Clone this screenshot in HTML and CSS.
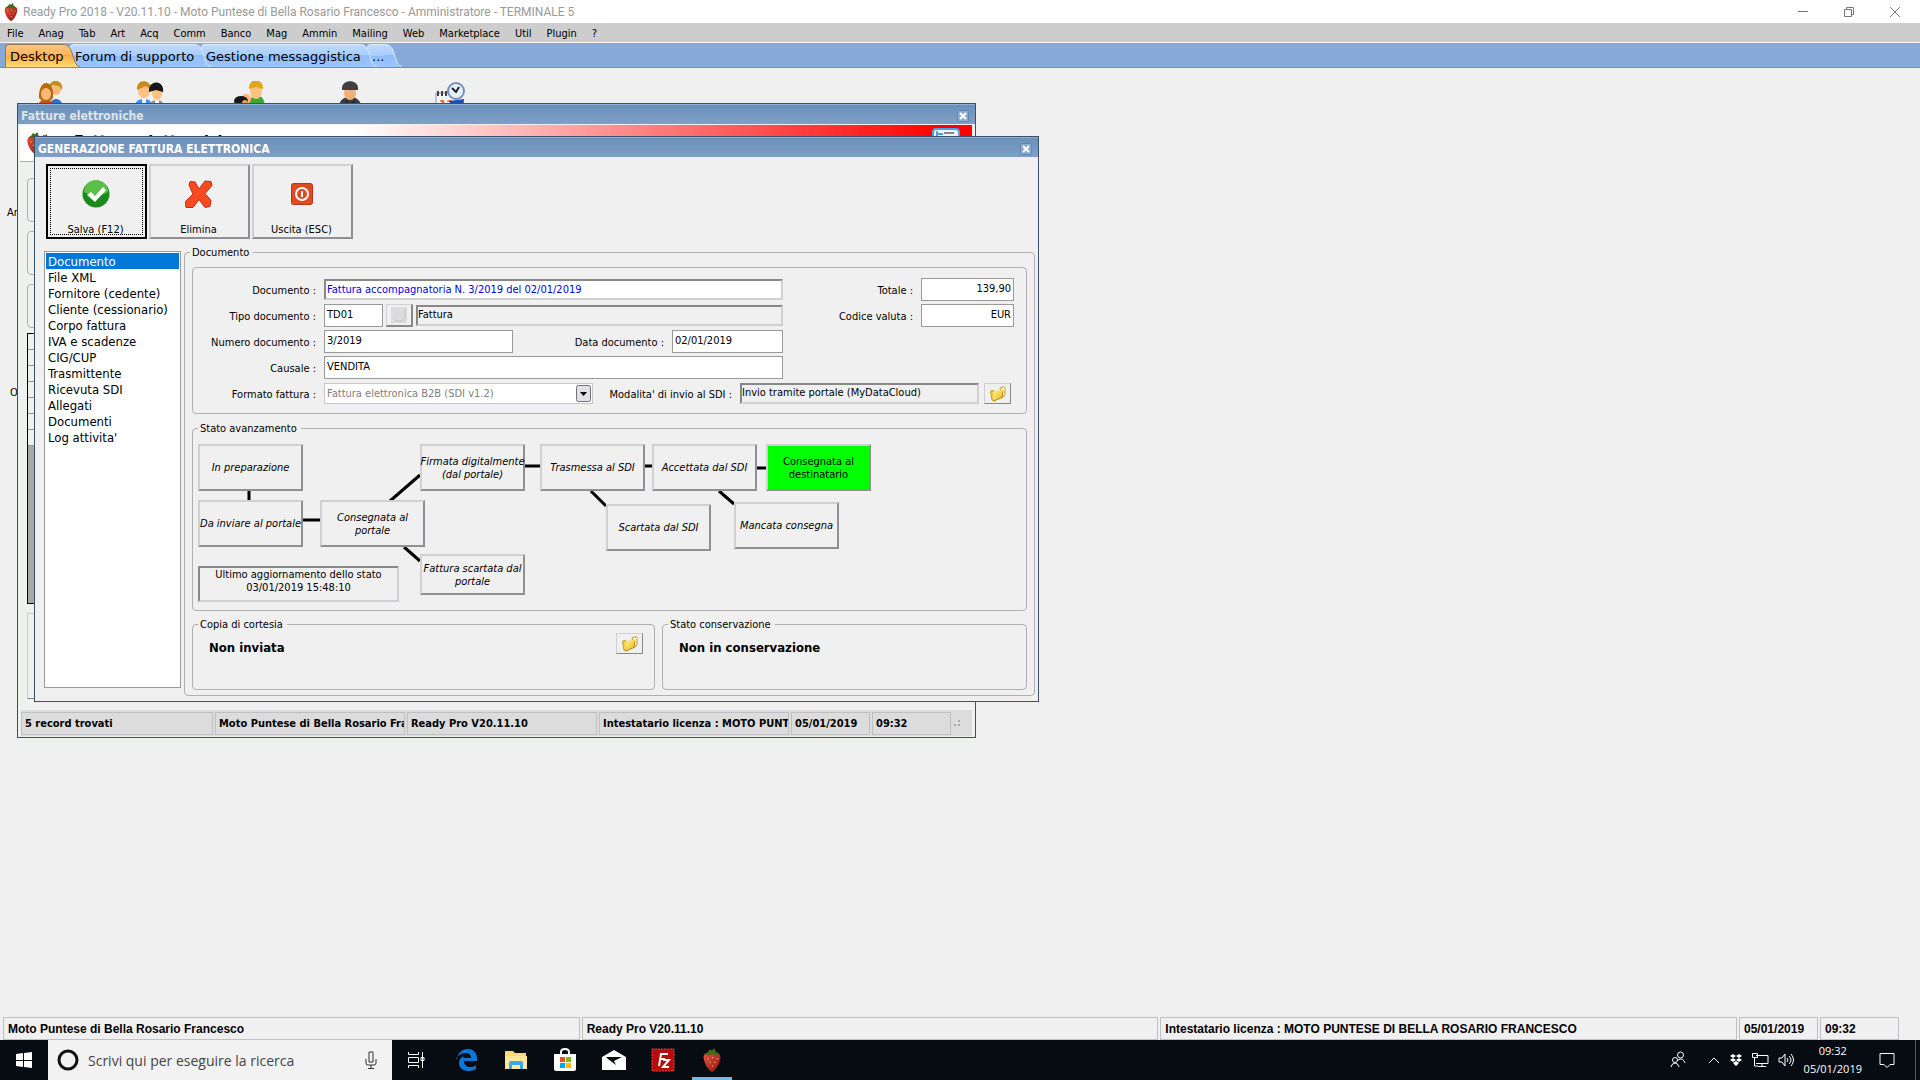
FILE: index.html
```html
<!DOCTYPE html>
<html lang="it">
<head>
  <meta charset="UTF-8">
  <meta name="viewport" content="width=device-width, initial-scale=1.0">
  <title>Ready Pro 2018</title>
  <link rel="stylesheet" href="styles.css">
</head>
<body>
  <!-- Shared symbols -->
  <svg class="defs" width="0" height="0" aria-hidden="true">
    <defs>
      <linearGradient id="berry" x1="0" y1="0" x2="1" y2="1">
        <stop offset="0" stop-color="#e8523a"/>
        <stop offset="1" stop-color="#8c1410"/>
      </linearGradient>
      <linearGradient id="folder" x1="0" y1="0" x2="1" y2="1">
        <stop offset="0" stop-color="#fff3a0"/>
        <stop offset="1" stop-color="#e6b800"/>
      </linearGradient>
      <linearGradient id="tabOn" x1="0" y1="0" x2="0" y2="1">
        <stop offset="0" stop-color="#ffc580"/>
        <stop offset="0.45" stop-color="#ffb65a"/>
        <stop offset="0.5" stop-color="#ffab3c"/>
        <stop offset="1" stop-color="#ffdc78"/>
      </linearGradient>
      <linearGradient id="tabOff" x1="0" y1="0" x2="0" y2="1">
        <stop offset="0" stop-color="#c0daff"/>
        <stop offset="0.48" stop-color="#a8cdff"/>
        <stop offset="0.5" stop-color="#8fbcfb"/>
        <stop offset="1" stop-color="#9cc6ff"/>
      </linearGradient>
    </defs>
    <symbol id="i-berry" viewBox="0 0 16 20">
      <path d="M1 8C1 4 4 4 8 4s7 0 7 4-4 11-7 12C5 19 1 12 1 8z" fill="url(#berry)"/>
      <path d="M2 5l3-2 1-2 2 1 2-2 1 3 3 2-3 1-3-1-3 1z" fill="#3f6b1c"/>
      <path d="M4 9h1M8 8h1M12 9h1M6 12h1M10 12h1M8 15h1" stroke="#ffb09a" stroke-width="1"/>
    </symbol>
    <symbol id="i-folder" viewBox="0 0 16 16">
      <path d="M10 2l4-1.500 1 1v8l-3 2z" fill="#fffbe0" stroke="#c8981c"/>
      <path d="M.5 5.500L2 4.500l3 1V15l-3-1z" fill="#f0cc50" stroke="#c8981c"/>
      <path d="M3.500 6l3-2 1 1 5-2 1 1-1 7-8 4-1-1z" fill="url(#folder)"/>
      <path d="M3.500 15l8.500-3.500 1-6" fill="none" stroke="#b88410"/>
    </symbol>
    <symbol id="i-close" viewBox="0 0 12 12">
      <rect x="0.500" y="0.500" width="11" height="11" rx="1" fill="#8aa9cd" stroke="#6487b0"/>
      <path d="M3 3l6 6M9 3l-6 6" stroke="#fff" stroke-width="2"/>
    </symbol>
  </svg>

  <header class="titlebar">
    <svg class="app-icon" width="16" height="18"><use href="#i-berry"/></svg>
    <span class="app-title">Ready Pro 2018 - V20.11.10 - Moto Puntese di Bella Rosario Francesco - Amministratore - TERMINALE 5</span>
    <div class="win-controls">
      <button type="button" aria-label="Riduci a icona"><svg width="12" height="12"><path d="M1 5.500h10" stroke="#777" fill="none"/></svg></button>
      <button type="button" aria-label="Ripristina"><svg width="12" height="12"><path d="M1.500 3.500h7v7h-7zM3.500 3.500v-2h7v7h-2" stroke="#777" fill="none"/></svg></button>
      <button type="button" aria-label="Chiudi"><svg width="12" height="12"><path d="M1 1l10 10M11 1L1 11" stroke="#777" fill="none"/></svg></button>
    </div>
  </header>

  <nav class="menubar">
    <button type="button">File</button>
    <button type="button">Anag</button>
    <button type="button">Tab</button>
    <button type="button">Art</button>
    <button type="button">Acq</button>
    <button type="button">Comm</button>
    <button type="button">Banco</button>
    <button type="button">Mag</button>
    <button type="button">Ammin</button>
    <button type="button">Mailing</button>
    <button type="button">Web</button>
    <button type="button">Marketplace</button>
    <button type="button">Util</button>
    <button type="button">Plugin</button>
    <button type="button">?</button>
  </nav>

  <div class="tabs">
    <button type="button" class="tab tab-on">Desktop<svg class="cap" width="18" height="23"><path d="M0 0C6 0 8 3 10 9S13 23 18 23H0z" fill="url(#tabOn)"/><path d="M0 .5C6 .5 8 3 10 9S13 22 18 22.500" fill="none" stroke="#8a7a5a"/></svg></button>
    <button type="button" class="tab tab-forum">Forum di supporto<svg class="cap" width="18" height="23"><path d="M0 0C6 0 8 3 10 9S13 23 18 23H0z" fill="url(#tabOff)"/><path d="M0 .5C6 .5 8 3 10 9S13 22 18 22.500" fill="none" stroke="#dcebff"/></svg></button>
    <button type="button" class="tab tab-msg">Gestione messaggistica<svg class="cap" width="18" height="23"><path d="M0 0C6 0 8 3 10 9S13 23 18 23H0z" fill="url(#tabOff)"/><path d="M0 .5C6 .5 8 3 10 9S13 22 18 22.500" fill="none" stroke="#dcebff"/></svg></button>
    <button type="button" class="tab tab-more">...<svg class="cap" width="18" height="23"><path d="M0 0C6 0 8 3 10 9S13 23 18 23H0z" fill="url(#tabOff)"/><path d="M0 .5C6 .5 8 3 10 9S13 22 18 22.500" fill="none" stroke="#dcebff"/></svg></button>
  </div>

  <main class="desktop">
    <div class="shortcuts">
      <svg width="32" height="32" viewBox="0 0 32 32">
        <path d="M14 32c0-8 3-14 8-14s8 6 8 14z" fill="#2f6fd0"/>
        <circle cx="22" cy="9" r="5" fill="#ffb877"/><path d="M15 8c-1-11 15-11 13 1l-3-4-6-1z" fill="#c88a18"/>
        <path d="M3 32c0-11 3-13 9-13s9 3 9 13z" fill="#cf4a1c"/>
        <path d="M5 17c-1-20 16-20 14 0l-3 3H8z" fill="#b8690c"/><ellipse cx="12" cy="13" rx="5" ry="6" fill="#ffb877"/>
      </svg>
      <svg width="32" height="32" viewBox="0 0 32 32">
        <path d="M0 32c0-11 3-14 10-14s8 3 8 14z" fill="#3a8ff0"/>
        <ellipse cx="10" cy="10" rx="6" ry="7" fill="#ffc080"/><path d="M3 9c-1-12 15-11 14 0l-5-4z" fill="#c88a18"/>
        <path d="M15 32c0-10 2-13 8-13s7 3 7 13z" fill="#909090"/><path d="M8 18h4v14H8zM21 19h4v13h-4z" fill="#fff"/>
        <ellipse cx="23" cy="12" rx="5" ry="7" fill="#ffc080"/><path d="M15 11c-1-13 16-12 14 0l-7-2z" fill="#161616"/>
      </svg>
      <svg width="32" height="32" viewBox="0 0 32 32">
        <path d="M13 32c0-13 4-17 10-17s8 3 8 17z" fill="#38a838"/>
        <ellipse cx="22" cy="10" rx="6" ry="8" fill="#ffc080"/><path d="M15 8c-1-12 15-11 14 0l-7-2z" fill="#dda818"/>
        <path d="M4 32c0-8 2-11 7-11s6 3 6 11z" fill="#e07020"/>
        <ellipse cx="12" cy="18" rx="5" ry="5" fill="#ffb877"/>
        <ellipse cx="7" cy="20" rx="7" ry="5" fill="#181818"/><circle cx="11" cy="22" r="3" fill="#e8a060"/>
      </svg>
      <svg width="32" height="32" viewBox="0 0 32 32">
        <path d="M4 32c0-13 5-16 12-16s12 3 12 16z" fill="#3c3c40"/>
        <ellipse cx="16" cy="12" rx="6" ry="7" fill="#f0b078"/>
        <path d="M8 7c0-9 16-9 16 0v2H8z" fill="#404044"/><path d="M12 18l4 5 5-5 2 14H10z" fill="#28282c"/>
      </svg>
      <svg width="32" height="32" viewBox="0 0 32 32">
        <path d="M2 12h20v20H2z" fill="#f4f6ff" stroke="#8a90b0"/><path d="M4 10v5M8 10v5M12 10v5" stroke="#444" stroke-width="2"/>
        <text class="cal" x="5" y="28">12</text>
        <path d="M15 20l5 12h9l1-14z" fill="#1c4fb0"/>
        <circle cx="22" cy="10" r="8" fill="#e4f1ff" stroke="#7490b8" stroke-width="2"/>
        <path d="M18 7l4 4 3-5" fill="none" stroke="#222" stroke-width="2"/>
      </svg>
    </div>
    <span class="peek peek-ar">Ar</span>
    <span class="peek peek-or">Or</span>

    <!-- Fatture elettroniche -->
    <section class="window win-list">
      <div class="caption caption-off">Fatture elettroniche
        <button type="button" class="close" aria-label="Chiudi"><svg width="12" height="12"><use href="#i-close"/></svg></button>
      </div>
      <div class="banner">
        <svg width="28" height="24" viewBox="0 0 28 24"><use href="#i-berry" x="0" y="0" width="18" height="22"/><use href="#i-berry" x="11" y="2" width="16" height="16"/></svg>
        <h1>Fatture elettroniche</h1>
        <svg class="banner-card" width="28" height="24"><rect x="1" y="1" width="26" height="26" rx="3" fill="#eef6ff" stroke="#4aa0e8" stroke-width="2"/><path d="M5 3v14M5 6h6" stroke="#4aa0e8" stroke-width="2"/><path d="M12 5h10" stroke="#808890" stroke-width="2"/></svg>
      </div>
      <div class="list-body">
        <div class="box"></div>
        <div class="box"></div>
        <div class="box"></div>
        <div class="grid">
          <div></div><div></div><div></div><div></div><div></div><div></div><div></div>
        </div>
        <div class="side-button"></div>
      </div>
      <footer class="status status-inner">
        <span class="p-first">5 record trovati</span>
        <span class="p-wide">Moto Puntese di Bella Rosario Fra</span>
        <span class="p-wide">Ready Pro V20.11.10</span>
        <span class="p-wide">Intestatario licenza : MOTO PUNT</span>
        <span class="p-small">05/01/2019</span>
        <span class="p-small">09:32</span>
        <svg width="10" height="10"><path d="M1 6h2v2H1zM5 6h2v2H5zM5 2h2v2H5z" fill="#aaa"/></svg>
      </footer>
    </section>

    <!-- Generazione fattura elettronica -->
    <section class="window win-invoice">
      <div class="caption">GENERAZIONE FATTURA ELETTRONICA
        <button type="button" class="close" aria-label="Chiudi"><svg width="12" height="12"><use href="#i-close"/></svg></button>
      </div>

      <div class="toolbar">
        <button type="button" class="tool tool-default">
          <svg width="28" height="28" viewBox="0 0 28 28"><circle cx="14" cy="14" r="13.500" fill="#1d8a1d"/><path d="M2 12a12 12 0 0 1 24 0c-6 4-16 5-24 0z" fill="#5cc048"/><path d="M5 15l4-3 4 4 8-9 3 3-11 12z" fill="#fff"/></svg>
          Salva (F12)
        </button>
        <button type="button" class="tool">
          <svg width="28" height="28" viewBox="0 0 28 28"><path d="M5 1.500l5 .5 4 7 6-8 6 .5 1 4-7 8 6 7-1 6-5 1-6-8-6 8H1l-.5-6L8 14 4 5z" fill="#fb4a20" stroke="#c02c10"/></svg>
          Elimina
        </button>
        <button type="button" class="tool">
          <svg width="28" height="28" viewBox="0 0 28 28"><rect x="3.500" y="3.500" width="21" height="21" rx="2" fill="#e2491f" stroke="#b8341a"/><circle cx="14" cy="14" r="6" fill="none" stroke="#fff" stroke-width="2"/><path d="M14 11v6" stroke="#fff" stroke-width="2"/></svg>
          Uscita (ESC)
        </button>
      </div>

      <div class="work">
        <nav class="sections">
          <a href="#" class="selected">Documento</a>
          <a href="#">File XML</a>
          <a href="#">Fornitore (cedente)</a>
          <a href="#">Cliente (cessionario)</a>
          <a href="#">Corpo fattura</a>
          <a href="#">IVA e scadenze</a>
          <a href="#">CIG/CUP</a>
          <a href="#">Trasmittente</a>
          <a href="#">Ricevuta SDI</a>
          <a href="#">Allegati</a>
          <a href="#">Documenti</a>
          <a href="#">Log attivita'</a>
        </nav>

        <div class="group group-main">
          <h2>Documento</h2>

          <form class="group form">
            <div class="row row-first">
              <label for="documento">Documento :</label>
              <input id="documento" class="sunken link-value" type="text" value="Fattura accompagnatoria N. 3/2019 del 02/01/2019" readonly>
              <label class="label-right" for="totale">Totale :</label>
              <input id="totale" class="amount" type="text" value="139,90">
            </div>
            <div class="row">
              <label for="tipo">Tipo documento :</label>
              <input id="tipo" class="code" type="text" value="TD01">
              <button type="button" class="pick pick-off" aria-label="Cerca tipo"><svg width="16" height="16"><path d="M0 0h16v16H0z" fill="#dcdcdc"/><path d="M3 12l2 2h7l2-3V2" fill="none" stroke="#c4c4c4"/></svg></button>
              <input class="sunken gray kind" type="text" value="Fattura" aria-label="Descrizione tipo" readonly>
              <label class="label-right" for="valuta">Codice valuta :</label>
              <input id="valuta" class="amount" type="text" value="EUR">
            </div>
            <div class="row">
              <label for="numero">Numero documento :</label>
              <input id="numero" class="number" type="text" value="3/2019">
              <label class="label-date" for="data">Data documento :</label>
              <input id="data" class="date" type="text" value="02/01/2019">
            </div>
            <div class="row">
              <label for="causale">Causale :</label>
              <input id="causale" class="wide" type="text" value="VENDITA">
            </div>
            <div class="row">
              <label for="formato">Formato fattura :</label>
              <div class="combo">
                <select id="formato" disabled><option>Fattura elettronica B2B (SDI v1.2)</option></select>
                <svg width="15" height="17"><rect x="0.500" y="0.500" width="14" height="16" rx="2" fill="#e2e2e6" stroke="#707078"/><path d="M4 7h7l-3.500 4z" fill="#000"/></svg>
              </div>
              <label class="label-mode" for="modo">Modalita' di invio al SDI :</label>
              <input id="modo" class="sunken gray mode" type="text" value="Invio tramite portale (MyDataCloud)" readonly>
              <button type="button" class="pick" aria-label="Apri"><svg width="16" height="16"><use href="#i-folder"/></svg></button>
            </div>
          </form>

          <div class="group flow">
            <h2>Stato avanzamento</h2>
            <svg class="links" width="700" height="160" viewBox="0 0 700 160">
              <path d="M56 62v10M110 91h18M197 72l30-26M211 118l16 14M332 37h16M398 62l15 15M452 37h8M526 62l15 13M564 39h10" fill="none" stroke="#000" stroke-width="3"/>
            </svg>
            <button type="button" class="node n-prep">In preparazione</button>
            <button type="button" class="node n-send">Da inviare al portale</button>
            <button type="button" class="node n-portal">Consegnata al<br>portale</button>
            <button type="button" class="node n-signed">Firmata digitalmente<br>(dal portale)</button>
            <button type="button" class="node n-refused">Fattura scartata dal<br>portale</button>
            <button type="button" class="node n-sent">Trasmessa al SDI</button>
            <button type="button" class="node n-sdi-refused">Scartata dal SDI</button>
            <button type="button" class="node n-accepted">Accettata dal SDI</button>
            <button type="button" class="node n-missed">Mancata consegna</button>
            <button type="button" class="node n-done">Consegnata al<br>destinatario</button>
            <div class="updated">Ultimo aggiornamento dello stato<br>03/01/2019 15:48:10</div>
          </div>

          <div class="bottom">
            <div class="group copy">
              <h2>Copia di cortesia</h2>
              <strong>Non inviata</strong>
              <button type="button" class="pick" aria-label="Apri copia"><svg width="16" height="16"><use href="#i-folder"/></svg></button>
            </div>
            <div class="group keep">
              <h2>Stato conservazione</h2>
              <strong>Non in conservazione</strong>
            </div>
          </div>
        </div>
      </div>
    </section>
  </main>

  <footer class="status status-main">
    <span class="s-grow">Moto Puntese di Bella Rosario Francesco</span>
    <span class="s-grow">Ready Pro V20.11.10</span>
    <span class="s-grow">Intestatario licenza : MOTO PUNTESE DI BELLA ROSARIO FRANCESCO</span>
    <span class="s-date">05/01/2019</span>
    <span class="s-date">09:32</span>
  </footer>

  <div class="taskbar">
    <button type="button" class="start" aria-label="Start"><svg width="16" height="16"><path d="M0 2l7-1v7H0zM8 1l8-1v8H8zM0 9h7v6l-7-1zM8 9h8v7l-8-1z" fill="#fff"/></svg></button>
    <div class="search">
      <svg width="22" height="22"><circle cx="11" cy="11" r="9" fill="none" stroke="#111" stroke-width="3"/></svg>
      <input type="text" placeholder="Scrivi qui per eseguire la ricerca" aria-label="Cerca">
      <svg width="12" height="18"><path d="M4 1h4v10H4zM1 8v4q0 2 2 2h6q2 0 2-2V8M6 14v3M3 17.500h6" fill="none" stroke="#333"/></svg>
    </div>
    <div class="apps">
      <button type="button" class="task-view" aria-label="Visualizzazione attivita'"><svg width="18" height="18"><path d="M1.500 1v2.500h10V1M1.500 17v-2.500h10V17M1.500 6.500h10v5h-10zM15.500 1v16M14 6.500h3v3h-3z" fill="none" stroke="#fff"/></svg></button>
      <button type="button" aria-label="Edge"><svg width="22" height="22" viewBox="0 0 22 22"><path d="M1 10C2 3 7 0 12 0c6 0 9 5 9 9v3H8c0 4 3 6 6 6 3 0 5-1 6-2v4c-2 1-4 2-8 2-6 0-9-4-9-8 0-3 2-6 5-7-1 1-1 2-1 2h8c0-3-2-5-5-5-4 0-8 2-10 6z" fill="#0a78d7"/></svg></button>
      <button type="button" aria-label="Esplora file"><svg width="22" height="20"><path d="M0 2q0-1 1-1h7l2 2h11v16H0z" fill="#fbd978"/><path d="M0 6h22v13H0z" fill="#ffe69a"/><path d="M4 19v-6q0-2 2-2h10q2 0 2 2v6h-3v-4H7v4z" fill="#3aa8e8"/></svg></button>
      <button type="button" aria-label="Store"><svg width="24" height="24"><path d="M8 7V4q0-3 4-3t4 3v3" fill="none" stroke="#fff" stroke-width="2"/><path d="M1 6h22v15q0 2-2 2H3q-2 0-2-2z" fill="#fff"/><path d="M7 9h5v5H7z" fill="#f25022"/><path d="M13 9h5v5h-5z" fill="#7fba00"/><path d="M7 15h5v5H7z" fill="#00a4ef"/><path d="M13 15h5v5h-5z" fill="#ffb900"/></svg></button>
      <button type="button" aria-label="Posta"><svg width="24" height="20"><path d="M0 7l12-7 12 7v13H0z" fill="#fff"/><path d="M4 7h16l-8 4 2 4-8-6z" fill="#070b12"/></svg></button>
      <button type="button" aria-label="FileZilla"><svg width="24" height="24"><rect x="1" y="1" width="22" height="22" fill="#b80c0c" stroke="#d84040" stroke-dasharray="2 1"/><path d="M8 18L10 6h7M9 11h5M12 12h6l-6 7h6" fill="none" stroke="#fff" stroke-width="2"/></svg></button>
      <button type="button" class="running" aria-label="Ready Pro"><svg width="20" height="24"><use href="#i-berry"/></svg></button>
    </div>
    <div class="tray">
      <svg class="people" width="16" height="18"><circle cx="10.500" cy="4" r="3" fill="none" stroke="#fff"/><circle cx="5" cy="9" r="2.500" fill="none" stroke="#fff"/><path d="M1 16q1-4 4-4t4 4M8 9q5-3 7 3" fill="none" stroke="#fff"/></svg>
      <svg width="12" height="8"><path d="M1 7l5-5 5 5" fill="none" stroke="#fff"/></svg>
      <svg width="14" height="12"><path d="M4 0l3 2-3 2-3-2zM10 0l3 2-3 2-3-2zM4 4l3 2-3 2-3-2zM10 4l3 2-3 2-3-2zM7 7l3 2-3 3-3-3z" fill="#fff"/></svg>
      <svg width="17" height="15"><path d="M4 2.500h12v8H4M10 10v3M6 13.500h8M.5.500h5v4h-5zM2.500 4v9H6" fill="none" stroke="#fff"/></svg>
      <svg width="17" height="14"><path d="M1 5h3l3-4v12L4 9H1zM9 5q2 2 0 4M11 3q4 4 0 8M13 1q5 6 0 12" fill="none" stroke="#fff"/></svg>
      <div class="clock">09:32<br>05/01/2019</div>
      <svg class="notify" width="16" height="17"><path d="M1 1.500h14v11h-4l-3 3-3-3H1z" fill="none" stroke="#fff"/></svg>
    </div>
  </div>
</body>
</html>
```
FILE: styles.css
```css
* {
  box-sizing: border-box;
}
body {
  margin: 0;
  height: 100vh;
  display: flex;
  flex-direction: column;
  overflow: hidden;
  background: #f0f0f0;
  color: #000;
  font-family: "DejaVu Sans Condensed", "DejaVu Sans", sans-serif;
  font-size: 11px;
}
button, input, select {
  font: inherit;
  color: inherit;
  margin: 0;
}
button {
  padding: 0;
  border: 0;
  background: none;
}
h1, h2 {
  margin: 0;
}
svg {
  display: block;
  flex: none;
}
.defs {
  position: absolute;
}

/* Application frame */
.titlebar {
  display: flex;
  align-items: center;
  height: 23px;
  padding: 0 2px 0 3px;
  background: #fff;
  color: #999;
  font-family: Roboto, "Open Sans", sans-serif;
  font-size: 12px;
}
.app-icon {
  margin-right: 4px;
}
.win-controls {
  display: flex;
  margin-left: auto;
}
.win-controls button {
  width: 46px;
  display: flex;
  justify-content: center;
}
.menubar {
  display: flex;
  gap: 15px;
  height: 20px;
  padding: 1px 7px 0;
  background: #cdcdcd;
  border-bottom: 1px solid #f4f4f4;
}
.tabs {
  display: flex;
  align-items: flex-end;
  height: 25px;
  padding-left: 5px;
  background: #87a9d7;
  border-bottom: 1px solid #5f92d2;
  font-family: "DejaVu Sans", sans-serif;
  font-size: 13px;
}
.tab {
  position: relative;
  height: 23px;
  margin-right: 8px;
  padding-left: 4px;
  text-align: left;
  white-space: nowrap;
  border-left: 1px solid #dcebff;
  border-top: 1px solid #dcebff;
  border-top-left-radius: 4px;
  background: linear-gradient(#c0daff, #a8cdff 48%, #8fbcfb 50%, #9cc6ff);
}
.tab-on {
  width: 57px;
  z-index: 4;
  border-color: #8a7a5a;
  background: linear-gradient(#ffc580, #ffb65a 45%, #ffab3c 50%, #ffdc78);
}
.tab-forum {
  width: 123px;
  z-index: 3;
}
.tab-msg {
  width: 158px;
  z-index: 2;
}
.tab-more {
  width: 17px;
  z-index: 1;
}
.cap {
  position: absolute;
  top: -1px;
  left: 100%;
  z-index: -1;
}

/* Desktop */
.desktop {
  position: relative;
  flex: 1;
  min-height: 0;
}
.shortcuts {
  display: flex;
  gap: 68px;
  padding: 13px 34px;
}
.cal {
  font-size: 12px;
  font-weight: bold;
  fill: #f06020;
}
.peek {
  position: absolute;
}
.peek-ar {
  left: 7px;
  top: 138px;
}
.peek-or {
  left: 10px;
  top: 318px;
}

/* Windows */
.window {
  position: absolute;
  display: flex;
  flex-direction: column;
  background: #f0f0f0;
  border: 1px solid #3c5068;
}
.win-list {
  left: 17px;
  top: 35px;
  width: 959px;
  height: 635px;
}
.win-invoice {
  left: 34px;
  top: 68px;
  width: 1005px;
  height: 566px;
}
.caption {
  display: flex;
  align-items: center;
  justify-content: space-between;
  flex: none;
  height: 20px;
  padding: 2px 6px 0 3px;
  border-top: 1px solid #8fb0d4;
  background: linear-gradient(#6a90ba, #7f9fc6);
  color: #fff;
  font-size: 12px;
  font-weight: bold;
}
.caption-off {
  color: #dfe4ea;
}
.banner {
  display: flex;
  align-items: flex-start;
  flex: none;
  height: 37px;
  margin: 1px 3px 0 2px;
  padding: 7px 12px 0 6px;
  background: linear-gradient(90deg, #fff 35%, #f00 97%);
  border-bottom: 1px solid #b0b0b0;
}
.banner h1 {
  margin-left: 20px;
  font-size: 16px;
  line-height: 20px;
}
.banner-card {
  margin-left: auto;
  margin-top: -4px;
}
.list-body {
  display: flex;
  flex-direction: column;
  gap: 9px;
  flex: 1;
  min-height: 0;
  padding: 16px 9px 0;
}
.box {
  flex: none;
  height: 44px;
  border: 1px solid #b0b0b0;
  border-radius: 4px;
}
.grid {
  flex: none;
  height: 271px;
  margin-top: -4px;
  border: 1px solid #000;
  background: #a8a8a8;
}
.grid div {
  height: 16px;
  border-bottom: 1px solid #999;
  background: #f0f0f0;
}
.side-button {
  flex: none;
  height: 86px;
  border: 1px solid #ccc;
  border-bottom-color: #888;
}
.status {
  display: flex;
  flex: none;
  gap: 2px;
  font-weight: bold;
}
.status span {
  overflow: hidden;
  white-space: nowrap;
  height: 23px;
  padding: 0 4px;
  line-height: 22px;
  border: 1px solid #c0c0c4;
}
.status-inner {
  align-items: center;
  height: 26px;
  margin: 0 3px 1px;
  background: #dcdcdc;
}
.status-inner span {
  flex: none;
  padding: 0 3px;
  line-height: 21px;
}
.p-first {
  width: 192px;
}
.p-wide {
  width: 190px;
}
.p-small {
  width: 79px;
}

/* Toolbar */
.toolbar {
  display: flex;
  gap: 2px;
  padding: 7px 11px 12px;
}
.tool {
  display: flex;
  flex-direction: column;
  align-items: center;
  justify-content: space-between;
  width: 101px;
  height: 75px;
  padding: 14px 2px 1px 0;
  border: 2px solid #d0d0d4;
  border-right-color: #909094;
  border-bottom-color: #909094;
}
.tool-default {
  border: 2px solid #000;
  outline: 1px dotted #000;
  outline-offset: -5px;
}

/* Work area */
.work {
  display: flex;
  flex: 1;
  gap: 3px;
  padding: 0 3px 6px 9px;
}
.sections {
  width: 137px;
  margin-bottom: 8px;
  padding: 1px;
  background: #fff;
  border: 1px solid #999;
  font-size: 13px;
}
.sections a {
  display: block;
  height: 16px;
  padding-left: 2px;
  line-height: 17px;
  color: #000;
  text-decoration: none;
}
.sections .selected {
  background: #0078d7;
  color: #fff;
}
.group {
  position: relative;
  border: 1px solid #b0b0b0;
  border-radius: 4px;
}
.group h2 {
  position: absolute;
  top: -7px;
  left: 5px;
  padding: 0 4px 0 2px;
  background: #f0f0f0;
  font-size: 11px;
  font-weight: normal;
  line-height: 14px;
}
.group-main {
  flex: 1;
  margin-top: 1px;
  padding: 14px 7px 5px;
}

/* Document form */
.form {
  display: flex;
  flex-direction: column;
  gap: 3px;
  height: 147px;
  padding: 9px 12px 0 0;
}
.row {
  display: flex;
  align-items: center;
  height: 23px;
}
.row-first {
  height: 24px;
}
.row label {
  flex: none;
  width: 123px;
  margin-right: 8px;
  padding-top: 2px;
  text-align: right;
}
.row .label-right {
  width: auto;
  margin-left: auto;
}
.row .label-date {
  width: 151px;
}
.row .label-mode {
  width: 139px;
}
.row input {
  height: 23px;
  padding: 0 2px 2px;
  border: 1px solid #999;
  background: #fff;
}
.row .sunken {
  height: 21px;
  border: 2px solid #888;
  border-right-color: #d0d0d4;
  border-bottom-color: #d0d0d4;
  padding-left: 1px;
}
.row .link-value {
  width: 459px;
  padding-bottom: 0;
  color: #0000f0;
}
.row .gray {
  background: #f0f0f0;
  padding-left: 0;
}
.row .amount {
  width: 93px;
  text-align: right;
}
.row .code {
  width: 59px;
}
.row .number {
  width: 189px;
}
.row .date {
  width: 111px;
}
.row .wide {
  width: 459px;
}
.row .kind {
  width: 367px;
}
.row .mode {
  width: 239px;
}
.pick {
  display: flex;
  align-items: center;
  justify-content: center;
  width: 27px;
  height: 21px;
  margin-left: 5px;
  border: 1px solid #d0d0d4;
  border-right-color: #888;
  border-bottom-color: #888;
}
.pick-off {
  height: 23px;
  margin: 0 3px;
  border-width: 1px 2px 2px 1px;
}
.combo {
  position: relative;
  width: 269px;
}
.combo select {
  display: block;
  width: 100%;
  height: 21px;
  padding: 0 2px;
  border: 1px solid #c8c8b8;
  border-radius: 0;
  background: #fff;
  color: #808080;
  opacity: 1;
  appearance: none;
}
.combo svg {
  position: absolute;
  right: 2px;
  top: 2px;
}

/* Progress diagram */
.flow {
  height: 183px;
  margin-top: 14px;
}
.links {
  position: absolute;
  left: 0;
  top: 0;
}
.node {
  position: absolute;
  width: 105px;
  height: 47px;
  display: flex;
  align-items: center;
  justify-content: center;
  border: 2px solid #d0d0d4;
  border-right-color: #909094;
  border-bottom-color: #909094;
  background: #f0f0f0;
  font-style: italic;
  line-height: 13px;
  white-space: nowrap;
}
.n-prep {
  left: 5px;
  top: 15px;
}
.n-send {
  left: 5px;
  top: 71px;
}
.n-portal {
  left: 127px;
  top: 71px;
}
.n-signed {
  left: 227px;
  top: 15px;
}
.n-refused {
  left: 227px;
  top: 125px;
  height: 41px;
}
.n-sent {
  left: 347px;
  top: 15px;
}
.n-sdi-refused {
  left: 413px;
  top: 75px;
}
.n-accepted {
  left: 459px;
  top: 15px;
}
.n-missed {
  left: 541px;
  top: 73px;
}
.n-done {
  left: 573px;
  top: 15px;
  background: #0f0;
  font-style: normal;
}
.updated {
  position: absolute;
  left: 5px;
  top: 137px;
  width: 201px;
  height: 36px;
  border: 2px solid #888;
  border-right-color: #d0d0d4;
  border-bottom-color: #d0d0d4;
  text-align: center;
  line-height: 13px;
}

/* Bottom groups */
.bottom {
  display: flex;
  gap: 7px;
  margin-top: 13px;
}
.bottom .group {
  display: flex;
  align-items: flex-start;
  justify-content: space-between;
  height: 66px;
  padding: 8px 11px 0 16px;
}
.copy {
  width: 463px;
}
.keep {
  flex: 1;
}
.bottom strong {
  font-size: 13px;
  line-height: 30px;
}

/* Main status bar */
.status-main {
  padding: 0 21px 0 3px;
  font-family: "Liberation Sans", Arial, sans-serif;
  font-size: 12px;
}
.s-grow {
  flex: 1;
}
.s-date {
  width: 79px;
}

/* Taskbar */
.taskbar {
  display: flex;
  flex: none;
  height: 40px;
  background: #070b12;
  color: #fff;
  font-family: "Open Sans", "Noto Sans", sans-serif;
}
.start {
  display: flex;
  align-items: center;
  justify-content: center;
  width: 48px;
}
.search {
  display: flex;
  align-items: center;
  width: 344px;
  padding: 0 15px 0 9px;
  background: #f2f2f2;
}
.search input {
  flex: 1;
  padding: 0 9px;
  border: 0;
  background: none;
  font-size: 14px;
}
.search input::placeholder {
  color: #444;
  opacity: 1;
}
.apps {
  display: flex;
  gap: 9px;
  padding-left: 4px;
}
.apps button {
  display: flex;
  align-items: center;
  justify-content: center;
  width: 40px;
}
.apps .task-view {
  margin-right: 2px;
}
.apps .running {
  border-bottom: 3px solid #76b9ed;
  padding-top: 3px;
}
.tray {
  display: flex;
  align-items: center;
  gap: 9px;
  margin-left: auto;
  margin-right: 4px;
  padding-right: 20px;
  border-right: 1px solid #555;
}
.people {
  margin-right: 13px;
}
.clock {
  text-align: center;
  line-height: 18px;
}
.notify {
  margin-left: 8px;
}
```
